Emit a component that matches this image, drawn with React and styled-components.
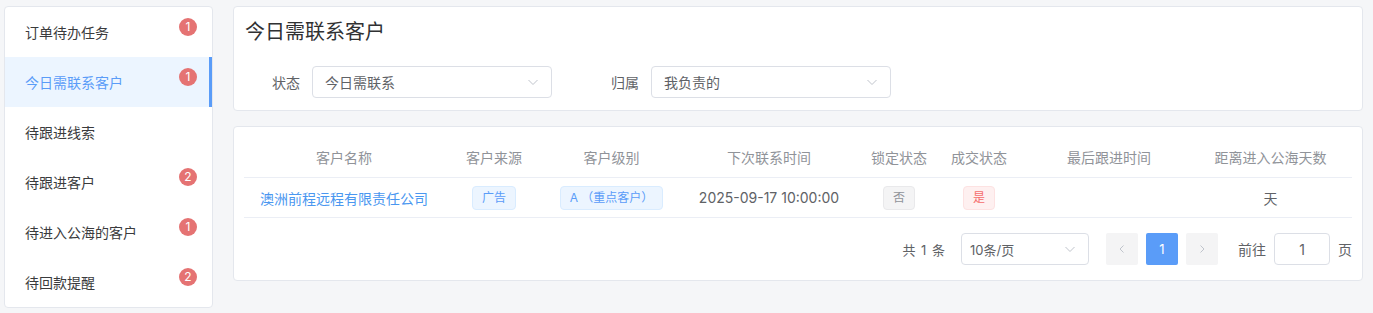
import React from 'react';
import styled, { createGlobalStyle } from 'styled-components';

const GlobalStyle = createGlobalStyle`
  body {
    margin: 0;
    background: #f5f6f8;
    font-family: Inter, "Noto Sans CJK SC", sans-serif;
    color: #303133;
  }
  * { box-sizing: border-box; }
`;

const Page = styled.div`
  display: flex;
  align-items: flex-start;
  gap: 20px;
  padding: 6px 10px 0 4px;
`;

const Card = styled.div`
  background: #fff;
  border: 1px solid #e4e7ed;
  border-radius: 4px;
`;

const SideMenu = styled(Card)`
  width: 209px;
  flex-shrink: 0;
  display: flex;
  flex-direction: column;
`;

const MenuItem = styled.div`
  position: relative;
  height: 50px;
  display: flex;
  align-items: center;
  padding-left: 20px;
  font-size: 14px;
  color: ${(p) => (p.$active ? '#5a9cf8' : '#3a3b3d')};
  background: ${(p) => (p.$active ? '#ecf5ff' : 'transparent')};
  box-shadow: ${(p) => (p.$active ? 'inset -3px 0 0 #5a9cf8' : 'none')};
`;

const Badge = styled.span`
  position: absolute;
  top: 11px;
  right: 15px;
  min-width: 18px;
  height: 18px;
  padding: 0 5px;
  border-radius: 9px;
  background: #e57373;
  color: #fff;
  font-size: 12px;
  line-height: 18px;
  text-align: center;
`;

const Main = styled.div`
  flex: 1;
  display: flex;
  flex-direction: column;
  gap: 15px;
`;

const FilterCard = styled(Card)`
  padding: 12px 11px;
`;

const Title = styled.div`
  font-size: 20px;
  line-height: 26px;
  color: #303133;
`;

const FilterRow = styled.div`
  display: flex;
  gap: 32px;
  margin-top: 21px;
`;

const FormItem = styled.div`
  display: flex;
  align-items: center;
`;

const Label = styled.div`
  width: 67px;
  padding-right: 12px;
  text-align: right;
  font-size: 14px;
  color: #606266;
`;

const Select = styled.div`
  width: ${(p) => p.$width}px;
  height: 32px;
  border: 1px solid #dcdfe6;
  border-radius: 4px;
  display: flex;
  align-items: center;
  justify-content: space-between;
  padding: 0 ${(p) => p.$padRight}px 0 ${(p) => p.$padLeft}px;
  font-size: ${(p) => p.$size}px;
  color: #606266;
`;

const Arrow = () => (
  <svg width="12" height="12" viewBox="0 0 12 12">
    <path d="M1.5 4 L6 8.5 L10.5 4" fill="none" stroke="#c0c4cc" strokeWidth="1" />
  </svg>
);

const TableCard = styled(Card)`
  padding: 10px 10px 15px;
`;

const Row = styled.div`
  display: grid;
  grid-template-columns: 200px 100px 135px 180px 80px 80px 180px 1fr;
  height: ${(p) => (p.$head ? 41 : 40)}px;
  border-bottom: 1px solid #ebeef5;
`;

const Cell = styled.div`
  display: flex;
  align-items: center;
  justify-content: center;
  font-size: 14px;
  color: ${(p) => (p.$head ? '#909399' : '#606266')};
  white-space: nowrap;

  &:last-child {
    padding-right: 10px;
  }
`;

const Link = styled.span`
  color: #4a97f0;
  cursor: pointer;
`;

const tagColors = {
  blue: ['#ecf5ff', '#d9ecff', '#5a9cf8'],
  gray: ['#f4f4f5', '#e9e9eb', '#909399'],
  red: ['#fef0f0', '#fde2e2', '#f56c6c'],
};

const Tag = styled.span`
  display: inline-block;
  height: 24px;
  line-height: 22px;
  padding: 0 9px;
  font-size: 12px;
  border-radius: 4px;
  background: ${(p) => tagColors[p.$type][0]};
  border: 1px solid ${(p) => tagColors[p.$type][1]};
  color: ${(p) => tagColors[p.$type][2]};
`;

const Pager = styled.div`
  display: flex;
  justify-content: flex-end;
  align-items: center;
  margin-top: 15px;
  height: 32px;
  font-size: 13px;
  color: #606266;
`;

const Total = styled.span`
  margin-right: 16px;
  word-spacing: 2px;
`;

const PageBtn = styled.div`
  width: 32px;
  height: 32px;
  border-radius: 2px;
  display: flex;
  align-items: center;
  justify-content: center;
  margin-left: ${(p) => (p.$first ? 17 : 8)}px;
  background: ${(p) => (p.$active ? '#5a9cf8' : '#f4f4f5')};
  color: ${(p) => (p.$active ? '#fff' : '#c0c4cc')};
  font-size: 13px;
`;

const Jumper = styled.div`
  display: flex;
  align-items: center;
  margin-left: 20px;
  font-size: 14px;
  gap: 8px;
`;

const JumpInput = styled.div`
  width: 56px;
  height: 32px;
  border: 1px solid #dcdfe6;
  border-radius: 4px;
  display: flex;
  align-items: center;
  justify-content: center;
  font-size: 14px;
  color: #606266;
`;

const Chevron = ({ dir }) => (
  <svg width="10" height="10" viewBox="0 0 10 10">
    <path
      d={dir === 'left' ? 'M6.5 1.5 L3 5 L6.5 8.5' : 'M3.5 1.5 L7 5 L3.5 8.5'}
      fill="none"
      stroke="#c0c4cc"
      strokeWidth="1"
    />
  </svg>
);

const menu = [
  { label: '订单待办任务', badge: 1 },
  { label: '今日需联系客户', badge: 1, active: true },
  { label: '待跟进线索' },
  { label: '待跟进客户', badge: 2 },
  { label: '待进入公海的客户', badge: 1 },
  { label: '待回款提醒', badge: 2 },
];

const headers = ['客户名称', '客户来源', '客户级别', '下次联系时间', '锁定状态', '成交状态', '最后跟进时间', '距离进入公海天数'];

export default function App() {
  return (
    <>
      <GlobalStyle />
      <Page>
        <SideMenu>
          {menu.map((m) => (
            <MenuItem key={m.label} $active={m.active}>
              {m.label}
              {m.badge && <Badge>{m.badge}</Badge>}
            </MenuItem>
          ))}
        </SideMenu>
        <Main>
          <FilterCard>
            <Title>今日需联系客户</Title>
            <FilterRow>
              <FormItem>
                <Label>状态</Label>
                <Select $width={240} $padLeft={12} $padRight={12} $size={14}>
                  今日需联系
                  <Arrow />
                </Select>
              </FormItem>
              <FormItem>
                <Label>归属</Label>
                <Select $width={240} $padLeft={12} $padRight={12} $size={14}>
                  我负责的
                  <Arrow />
                </Select>
              </FormItem>
            </FilterRow>
          </FilterCard>
          <TableCard>
            <Row $head>
              {headers.map((h) => (
                <Cell key={h} $head>{h}</Cell>
              ))}
            </Row>
            <Row>
              <Cell><Link>澳洲前程远程有限责任公司</Link></Cell>
              <Cell><Tag $type="blue">广告</Tag></Cell>
              <Cell><Tag $type="blue">A （重点客户）</Tag></Cell>
              <Cell>2025-09-17 10:00:00</Cell>
              <Cell><Tag $type="gray">否</Tag></Cell>
              <Cell><Tag $type="red">是</Tag></Cell>
              <Cell />
              <Cell>天</Cell>
            </Row>
            <Pager>
              <Total>共 1 条</Total>
              <Select $width={128} $padLeft={8} $padRight={12} $size={13}>
                10条/页
                <Arrow />
              </Select>
              <PageBtn $first><Chevron dir="left" /></PageBtn>
              <PageBtn $active>1</PageBtn>
              <PageBtn><Chevron dir="right" /></PageBtn>
              <Jumper>
                前往
                <JumpInput>1</JumpInput>
                页
              </Jumper>
            </Pager>
          </TableCard>
        </Main>
      </Page>
    </>
  );
}
